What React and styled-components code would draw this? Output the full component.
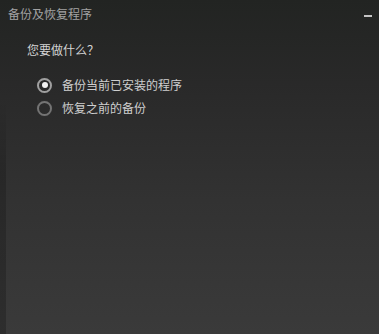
import React from "react";
import styled, { createGlobalStyle } from "styled-components";

const Global = createGlobalStyle`
  html, body { margin: 0; padding: 0; }
  body { width: 379px; height: 334px; overflow: hidden; background: #222; }
  * { box-sizing: border-box; }
`;

const Window = styled.div`
  width: 379px;
  height: 334px;
  position: relative;
  background: linear-gradient(to bottom, #222422 0%, #292929 25%, #323232 60%, #3a3a3a 100%);
  font-family: "Noto Sans CJK SC", "Microsoft YaHei", sans-serif;
  display: flex;
  flex-direction: column;
  &::before {
    content: "";
    position: absolute;
    left: 0;
    top: 100px;
    bottom: 0;
    width: 6px;
    background: linear-gradient(to bottom, rgba(0,0,0,0) 0%, rgba(0,0,0,0.18) 30%, rgba(0,0,0,0.22) 100%);
  }
`;

const TitleBar = styled.div`
  height: 28px;
  display: flex;
  align-items: center;
  justify-content: space-between;
  padding: 0 7px 0 8px;
`;

const Title = styled.span`
  font-size: 12px;
  color: #a2a2a2;
  line-height: 16px;
`;

const MinButton = styled.span`
  width: 8px;
  height: 2px;
  background: #c4c4c4;
  margin-top: 3px;
`;

const Body = styled.div`
  padding: 14px 0 0 27px;
  display: flex;
  flex-direction: column;
`;

const Question = styled.div`
  font-size: 12px;
  color: #d2d2d2;
  line-height: 16px;
  height: 16px;
`;

const Options = styled.div`
  margin-top: 19px;
  padding-left: 10px;
  display: flex;
  flex-direction: column;
  gap: 7px;
`;

const Option = styled.label`
  display: flex;
  align-items: center;
  gap: 10px;
  height: 16px;
  line-height: 16px;
  font-size: 12px;
  color: #cfcfcf;
`;

const Radio = styled.span`
  width: 15px;
  height: 15px;
  flex: none;
  border-radius: 50%;
  border: 2px solid ${(p) => (p.checked ? "#a0a0a0" : "#747474")};
  box-shadow: 0 0 1px rgba(255,255,255,0.15);
  display: flex;
  align-items: center;
  justify-content: center;
  &::after {
    content: "";
    width: 6px;
    height: 6px;
    border-radius: 50%;
    background: ${(p) => (p.checked ? "#f2f2f2" : "transparent")};
  }
`;

export default function App() {
  return (
    <>
      <Global />
      <Window>
        <TitleBar>
          <Title>备份及恢复程序</Title>
          <MinButton />
        </TitleBar>
        <Body>
          <Question>您要做什么？</Question>
          <Options>
            <Option>
              <Radio checked />
              备份当前已安装的程序
            </Option>
            <Option>
              <Radio />
              恢复之前的备份
            </Option>
          </Options>
        </Body>
      </Window>
    </>
  );
}
